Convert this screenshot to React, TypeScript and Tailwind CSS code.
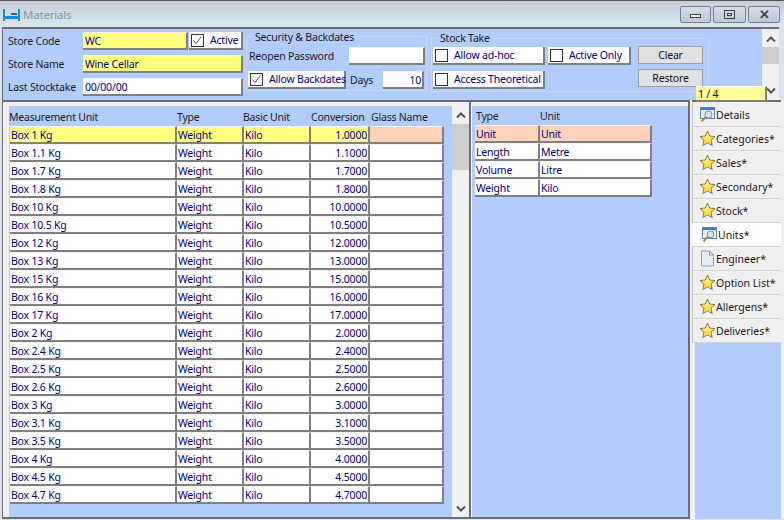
const rows = [
  ['Box 1 Kg', '1.0000'], ['Box 1.1 Kg', '1.1000'], ['Box 1.7 Kg', '1.7000'], ['Box 1.8 Kg', '1.8000'],
  ['Box 10 Kg', '10.0000'], ['Box 10.5 Kg', '10.5000'], ['Box 12 Kg', '12.0000'], ['Box 13 Kg', '13.0000'],
  ['Box 15 Kg', '15.0000'], ['Box 16 Kg', '16.0000'], ['Box 17 Kg', '17.0000'], ['Box 2 Kg', '2.0000'],
  ['Box 2.4 Kg', '2.4000'], ['Box 2.5 Kg', '2.5000'], ['Box 2.6 Kg', '2.6000'], ['Box 3 Kg', '3.0000'],
  ['Box 3.1 Kg', '3.1000'], ['Box 3.5 Kg', '3.5000'], ['Box 4 Kg', '4.0000'], ['Box 4.5 Kg', '4.5000'],
  ['Box 4.7 Kg', '4.7000'],
];

const unitRows = [
  ['Unit', 'Unit'],
  ['Length', 'Metre'],
  ['Volume', 'Litre'],
  ['Weight', 'Kilo'],
];

const tabs = [
  { label: 'Details', icon: 'search', pad: 'pl-[6px]' },
  { label: 'Categories*', icon: 'star', pad: 'pl-[6px]' },
  { label: 'Sales*', icon: 'star', pad: 'pl-[6px]' },
  { label: 'Secondary*', icon: 'star', pad: 'pl-[6px]' },
  { label: 'Stock*', icon: 'star', pad: 'pl-[6px]' },
  { label: 'Units*', icon: 'search', pad: 'pl-[9px]', active: true },
  { label: 'Engineer*', icon: 'doc', pad: 'pl-[7px]' },
  { label: 'Option List*', icon: 'star', pad: 'pl-[6px]' },
  { label: 'Allergens*', icon: 'star', pad: 'pl-[6px]' },
  { label: 'Deliveries*', icon: 'star', pad: 'pl-[6px]' },
];

const Star = () => (
  <svg width="17" height="17" viewBox="0 0 17 17" className="shrink-0">
    <path d="M8.5 1 L10.7 6 L16 6.6 L12 10.2 L13.2 15.6 L8.5 12.8 L3.8 15.6 L5 10.2 L1 6.6 L6.3 6 Z" fill="#ffdf4f" stroke="#8a7a3a" strokeWidth="1" strokeLinejoin="round" />
    <path d="M8.5 3 L9.8 7 L6.5 8 Z" fill="#fff7c0" />
  </svg>
);

const SearchIcon = () => (
  <svg width="17" height="17" viewBox="0 0 17 17" className="shrink-0">
    <rect x="1.5" y="1.5" width="14" height="11" fill="#e8f0fa" stroke="#5a82b8" />
    <rect x="2" y="2" width="13" height="2" fill="#3f78c8" />
    <circle cx="9.5" cy="8.5" r="3.5" fill="#cfe6f7" stroke="#7a8a98" />
    <path d="M6.5 11 L2.5 15.5" stroke="#b8863c" strokeWidth="2" />
  </svg>
);

const DocIcon = () => (
  <svg width="15" height="17" viewBox="0 0 15 17" className="shrink-0">
    <path d="M1.5 1 H9.5 L13.5 5 V16 H1.5 Z" fill="#e6effb" stroke="#7d9cc8" />
    <path d="M9.5 1 V5 H13.5 Z" fill="#ffffff" stroke="#7d9cc8" />
  </svg>
);

const Check = ({ checked }: { checked?: boolean }) => (
  <span className="flex h-[13px] w-[13px] shrink-0 items-center justify-center border border-[#333] bg-white">
    {checked && (
      <svg width="11" height="11" viewBox="0 0 11 11">
        <path d="M1.5 5.5 L4 8.5 L9.5 1.5" fill="none" stroke="#555" strokeWidth="1" />
      </svg>
    )}
  </span>
);

const CheckField = ({ label, checked, w }: { label: string; checked?: boolean; w: string }) => (
  <div className={`flex h-[18px] shrink-0 items-center gap-[6px] whitespace-nowrap border-b-2 border-r-2 border-b-[#808080] border-r-[#808080] bg-white pl-[2px] text-[#000080] ${w}`}>
    <Check checked={checked} />
    <span>{label}</span>
  </div>
);

const Input = ({ value, w, yellow, right }: { value?: string; w: string; yellow?: boolean; right?: boolean }) => (
  <div className={`h-[18px] shrink-0 border-b-2 border-r-2 border-t border-b-[#808080] border-r-[#808080] border-t-[#f0f0f0] pl-[2px] pr-[1px] pt-[1px] leading-[15px] text-[#000080] ${w} ${yellow ? 'bg-[#ffff80]' : 'bg-white'} ${right ? 'text-right' : ''}`}>
    {value}
  </div>
);

const Cell = ({ value, w, bg, right }: { value?: string; w: string; bg: string; right?: boolean }) => (
  <div className={`h-[18px] shrink-0 overflow-hidden whitespace-nowrap border-b-2 border-r-2 border-t border-b-[#808080] border-r-[#808080] border-t-[#f4f4f4] pl-[1px] pr-[1px] pt-[1px] leading-[14px] text-[#000080] ${w} ${bg} ${right ? 'text-right' : ''}`}>
    {value}
  </div>
);

const FlatButton = ({ label }: { label: string }) => (
  <div className="flex h-[18px] w-[65px] items-center justify-center border border-[#a0a0a0] bg-[#e1e1e1] text-[#111]">
    {label}
  </div>
);

const WinButton = ({ w, children }: { w: string; children: React.ReactNode }) => (
  <div className={`flex h-[17px] items-center justify-center rounded-[2px] border border-[#76808c] bg-gradient-to-b from-[#d6dfe9] to-[#bcc8d6] ${w}`}>
    {children}
  </div>
);

const ScrollArrow = ({ up }: { up?: boolean }) => (
  <svg width="10" height="7" viewBox="0 0 10 7" className="shrink-0">
    <path d={up ? 'M1 5.5 L5 1.5 L9 5.5' : 'M1 1.5 L5 5.5 L9 1.5'} fill="none" stroke="#555" strokeWidth="2" />
  </svg>
);

export default function App() {
  return (
    <div className="relative flex h-[520px] w-[784px] flex-col overflow-hidden bg-[#dbe4ee] font-['Noto_Sans','Liberation_Sans',sans-serif] text-[10.5px] leading-[14px] tracking-[-0.2px] text-[#1a1a1a]">
      {/* title bar */}
      <div className="flex h-[27px] shrink-0 items-start border-t border-[#555] bg-gradient-to-b from-[#c3ced9] to-[#dde7f1]">
        <svg width="17" height="12" viewBox="0 0 17 12" className="ml-[3px] mt-[8px]">
          <path d="M1 0 V12 M16 0 V12" stroke="#0f8ee8" strokeWidth="2" />
          <path d="M1 8.5 H16" stroke="#0f8ee8" strokeWidth="3" />
          <path d="M8 6 H14 V4 H8 Z" fill="#42586e" />
        </svg>
        <span className="ml-[3px] mt-[7px] text-[11.5px] text-[#8a949e]">Materials</span>
        <div className="ml-auto mr-[4px] mt-[5px] flex gap-[2px]">
          <WinButton w="w-[31px]"><span className="mt-[3px] h-[4px] w-[11px] border border-[#444] bg-white" /></WinButton>
          <WinButton w="w-[33px]"><span className="flex h-[9px] w-[11px] items-center justify-center border border-[#444]"><span className="h-[3px] w-[5px] border border-[#444]" /></span></WinButton>
          <WinButton w="w-[32px]"><span className="text-[13px] font-bold leading-none text-[#444]">✕</span></WinButton>
        </div>
      </div>

      {/* header panel */}
      <div className="ml-[2px] mr-[5px] flex h-[73px] shrink-0 border-l border-t-2 border-[#6e6e6e] bg-[#b3ccff]">
        <div className="ml-[5px] mt-[3px] flex w-[235px] shrink-0 flex-col gap-[5px]">
          <div className="flex h-[18px] items-center">
            <span className="w-[76px]">Store Code</span>
            <Input value="WC" yellow w="w-[105px]" />
            <div className="w-[1px]" />
            <CheckField label="Active" checked w="w-[54px]" />
          </div>
          <div className="flex h-[18px] items-center">
            <span className="w-[76px]">Store Name</span>
            <Input value="Wine Cellar" yellow w="w-[160px]" />
          </div>
          <div className="flex h-[18px] items-center">
            <span className="w-[76px]">Last Stocktake</span>
            <Input value="00/00/00" w="w-[160px]" />
          </div>
        </div>

        <div className="relative ml-[3px] mt-[7px] h-[55px] w-[181px] shrink-0 border border-[#c9d6ee] pl-[2px] pt-[10px]">
          <span className="absolute left-[6px] top-[-7px] bg-[#b3ccff] px-[2px]">Security &amp; Backdates</span>
          <div className="flex h-[18px] items-center">
            <span className="w-[100px]">Reopen Password</span>
            <Input w="w-[76px]" />
          </div>
          <div className="-ml-[1px] mt-[6px] flex h-[18px] items-center">
            <CheckField label="Allow Backdates" checked w="w-[98px]" />
            <span className="ml-[4px] w-[33px]">Days</span>
            <Input value="10" right w="w-[41px]" />
          </div>
        </div>

        <div className="relative ml-[4px] mt-[9px] h-[54px] w-[278px] shrink-0 border border-[#c9d6ee] pl-[1px] pt-[8px]">
          <span className="absolute left-[6px] top-[-8px] bg-[#b3ccff] px-[2px]">Stock Take</span>
          <div className="flex">
            <div className="w-[205px] shrink-0">
              <div className="flex gap-[3px]">
                <CheckField label="Allow ad-hoc" w="w-[112px]" />
                <CheckField label="Active Only" w="w-[83px]" />
              </div>
              <div className="mt-[6px]">
                <CheckField label="Access Theoretical" w="w-[112px]" />
              </div>
            </div>
            <div className="-mt-[1px] flex flex-col gap-[5px]">
              <FlatButton label="Clear" />
              <FlatButton label="Restore" />
            </div>
          </div>
        </div>

        <div className="ml-auto flex w-[17px] shrink-0 flex-col items-center bg-[#f0f0f0] pb-[6px] pt-[7px]">
          <ScrollArrow up />
          <div className="mt-[4px] h-[17px] w-full bg-[#cdcdcd]" />
          <div className="mt-auto"><ScrollArrow /></div>
        </div>
      </div>

      {/* lower area */}
      <div className="ml-[2px] flex h-[419px] shrink-0 bg-[#f0f0f0]">
        <div className="flex w-[469px] shrink-0 border-b-2 border-l border-r-2 border-t-2 border-[#6e6e6e] bg-[#f0f0f0] pl-[6px] pt-[4px]">
          <div className="flex-1 bg-[#b3ccff] pl-[1px]">
            <div className="flex h-[20px] items-center pt-[2px]">
              <span className="-ml-[1px] w-[168px]">Measurement Unit</span>
              <span className="w-[66px]">Type</span>
              <span className="w-[68px]">Basic Unit</span>
              <span className="w-[60px]">Conversion</span>
              <span>Glass Name</span>
            </div>
            {rows.map(([name, conv], i) => {
              const bg = i === 0 ? 'bg-[#ffff80]' : 'bg-white';
              return (
                <div key={name} className="flex">
                  <Cell value={name} w="w-[167px]" bg={bg} />
                  <Cell value="Weight" w="w-[67px]" bg={bg} />
                  <Cell value="Kilo" w="w-[67px]" bg={bg} />
                  <Cell value={conv} right w="w-[59px]" bg={bg} />
                  <Cell w="w-[74px]" bg={i === 0 ? 'bg-[#ffd2b9]' : 'bg-white'} />
                </div>
              );
            })}
          </div>
          <div className="flex w-[17px] shrink-0 flex-col items-center bg-[#f0f0f0]">
            <div className="flex h-[18px] items-center"><ScrollArrow up /></div>
            <div className="h-[46px] w-full bg-[#cdcdcd]" />
            <div className="mt-auto flex h-[18px] items-center"><ScrollArrow /></div>
          </div>
        </div>

        <div className="flex w-[219px] shrink-0 border-b-2 border-r-2 border-t-2 border-b-[#6e6e6e] border-r-[#6e6e6e] border-t-[#6e6e6e] bg-[#f0f0f0] pt-[4px]">
          <div className="h-full flex-1 border-l border-white bg-[#b3ccff] pl-[3px]">
            <div className="flex h-[19px] items-center pt-[1px]">
              <span className="w-[65px] pl-[1px]">Type</span>
              <span>Unit</span>
            </div>
            {unitRows.map(([type, unit], i) => {
              const bg = i === 0 ? 'bg-[#ffd2b9]' : 'bg-white';
              return (
                <div key={type} className="flex">
                  <Cell value={type} w="w-[65px]" bg={bg} />
                  <Cell value={unit} w="w-[112px]" bg={bg} />
                </div>
              );
            })}
          </div>
        </div>

        {/* side tabs */}
        <div className="ml-[2px] flex w-[89px] shrink-0 flex-col bg-[#f0f0f0] tracking-normal">
          <div className="h-[3px] shrink-0 border-t-2 border-[#6e6e6e]" />
          {tabs.map((t) => (
            <div
              key={t.label}
              className={`flex h-[24px] shrink-0 items-center border-b border-[#d4d4d4] ${t.pad} ${t.active ? 'bg-white' : 'border-l border-l-[#c4c4c4] bg-[#f0f0f0]'} ${t.icon === 'doc' ? 'gap-[1px]' : 'gap-0'}`}
            >
              {t.icon === 'star' && <Star />}
              {t.icon === 'search' && <SearchIcon />}
              {t.icon === 'doc' && <DocIcon />}
              <span className="whitespace-nowrap">{t.label}</span>
            </div>
          ))}
          <div className="ml-[3px] flex-1 bg-[#b3ccff]" />
        </div>
      </div>

      {/* record counter, sits over the panel edge */}
      <div className="absolute left-[696px] top-[86px] h-[16px] w-[71px] border-b-2 border-r-2 border-t border-b-[#808080] border-r-[#808080] border-t-white bg-[#ffff99] pl-[2px] leading-[14px] text-[#111]">
        1 / 4
      </div>
    </div>
  );
}
